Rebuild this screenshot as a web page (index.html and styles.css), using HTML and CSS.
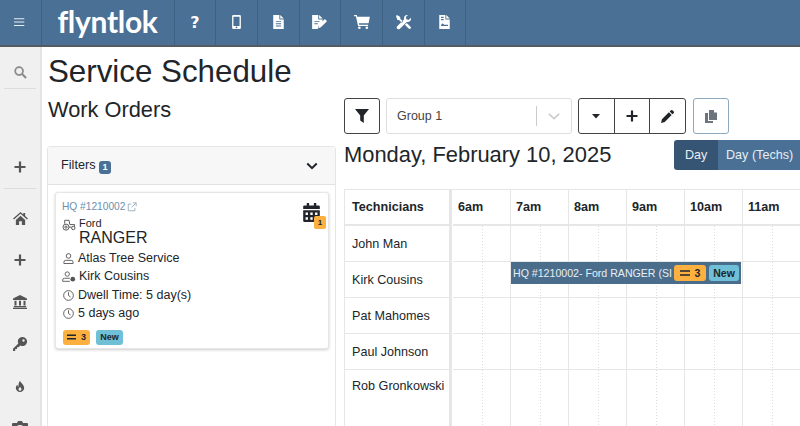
FILE: index.html
```html
<!DOCTYPE html>
<html lang="en">
<head>
<meta charset="utf-8">
<title>Service Schedule</title>
<link rel="stylesheet" href="styles.css">
</head>
<body>
<header class="topbar">
  <div class="nav-cell burger"><svg class="ic-w" viewBox="0 0 14 12" width="12" height="11"><path d="M0 1.500h12M0 5.500h12M0 9.500h12" stroke="#e8eef3" stroke-width="1.200" fill="none"/></svg></div>
  <div class="nav-cell logo"><span class="logo-text">flyntlok</span></div>
  <div class="nav-cell"><span class="qmark">?</span></div>
  <div class="nav-cell"><svg viewBox="0 0 10 16" width="9" height="14"><path fill-rule="evenodd" fill="#fff" d="M1.500 0h7A1.500 1.500 0 0 1 10 1.500v13A1.500 1.500 0 0 1 8.500 16h-7A1.500 1.500 0 0 1 0 14.500v-13A1.500 1.500 0 0 1 1.500 0zM1.500 2v10.500h7V2zM5 13.200a1 1 0 1 0 0 2 1 1 0 0 0 0-2z"/></svg></div>
  <div class="nav-cell"><svg viewBox="0 0 12 16" width="11" height="14"><path fill-rule="evenodd" fill="#fff" d="M0 0h7v5h5v11H0zM8 0l4 4H8zM3 7v1h6V7zM3 9.500v1h6v-1zM3 12v1h6v-1z"/></svg></div>
  <div class="nav-cell"><svg viewBox="0 0 18 16" width="16" height="14"><path fill-rule="evenodd" fill="#fff" d="M0 0h7v5h5v3l-5 5-.5 3H0zM8 0l4 4H8zM2.500 7v1h6V7zM2.500 9.500v1h4v-1z"/><path fill="#fff" d="M14.500 4.500l2.500 2.500-7 7-3 1 .8-3.200z"/></svg></div>
  <div class="nav-cell"><svg viewBox="0 0 18 16" width="16" height="14"><path fill="#fff" d="M0 0h3l.5 2H18l-1.500 7.500H5.500l.3 1.500H16v1.500H4.500L2 1.500H0z"/><circle cx="6" cy="14.500" r="1.500" fill="#fff"/><circle cx="14.500" cy="14.500" r="1.500" fill="#fff"/></svg></div>
  <div class="nav-cell"><svg viewBox="0 0 16 16" width="15" height="15"><path fill="#fff" d="M1 0l3.500 2.200V4l3 3-1.300 1.300-3-3H1.500L0 1zM12 0a3.500 3.500 0 0 0-3.300 4.600L1 12.200A2.100 2.100 0 0 0 3.900 15l7.600-7.600A3.500 3.500 0 0 0 15.800 3l-2.300 2.200-2.400-.6-.6-2.400L12.800.1A3.500 3.500 0 0 0 12 0z"/><path fill="#fff" d="M9.500 10.500l2-2 4 4a1.400 1.400 0 0 1-2 2z"/></svg></div>
  <div class="nav-cell"><svg viewBox="0 0 12 16" width="11" height="14"><path fill-rule="evenodd" fill="#fff" d="M0 0h7v5h5v11H0zM8 0l4 4H8zM2 2v1.500h3V2zM2 4.500V6h3V4.500zM2 11.500l2-2 1.500 1.500h4.500v1.500H2z"/></svg></div>
</header>

<div class="shell">
  <aside class="sidebar">
    <div class="side-item side-search"><svg viewBox="0 0 14 14" width="13" height="13"><circle cx="5.500" cy="5.500" r="4.200" fill="none" stroke="#8a8a8a" stroke-width="1.900"/><path d="M8.700 8.700l4.300 4.300" stroke="#8a8a8a" stroke-width="2.200"/></svg></div>
    <div class="side-spacer"></div>
    <div class="side-item side-add"><svg viewBox="0 0 12 12" width="12" height="12"><path d="M6 .5v11M.5 6h11" stroke="#555" stroke-width="2.200"/></svg></div>
    <nav class="side-links">
      <div class="side-item"><svg viewBox="0 0 16 14" width="15" height="13"><path fill="#555" d="M8 0L0 7l1 1 7-6 7 6 1-1-3-2.700V1h-2v1.600zM3 8.500V14h3.500v-4h3v4H13V8.500L8 4z"/></svg></div>
      <div class="side-item"><svg viewBox="0 0 12 12" width="12" height="12"><path d="M6 .5v11M.5 6h11" stroke="#555" stroke-width="2.200"/></svg></div>
      <div class="side-item"><svg viewBox="0 0 14 14" width="14" height="14"><path fill="#555" d="M7 0l7 3.500V5H0V3.500zM1.500 5.800h2v4.700h-2zM6 5.800h2v4.700H6zM10.500 5.800h2v4.700h-2zM.8 11h12.400v1.200H.8zM0 12.800h14V14H0z"/></svg></div>
      <div class="side-item"><svg viewBox="0 0 14 14" width="14" height="14"><path fill-rule="evenodd" fill="#555" d="M9.500 0a4.500 4.500 0 1 1-2.200 8.400L5.500 10.200H4V12H2.200v2H0v-2.300l5.300-5.200A4.500 4.500 0 0 1 9.500 0zM10.500 2.300a1.200 1.200 0 1 0 0 2.400 1.200 1.200 0 0 0 0-2.400z"/></svg></div>
      <div class="side-item"><svg viewBox="0 0 12 14" width="10" height="13"><path fill-rule="evenodd" fill="#555" d="M6 0c.5 2.500 5 4.500 5 8.700A5 5 0 0 1 1 8.700c0-1.800 1-3 2-3.700 0 1.200.4 2 1.200 2.300C4 4.500 4.500 2 6 0zM6 7.500c-1 1-1.800 1.700-1.800 2.800a1.800 1.800 0 0 0 3.600 0C7.800 9.200 7 8.500 6 7.500z"/></svg></div>
      <div class="side-item"><svg viewBox="0 0 16 14" width="16" height="14"><path fill-rule="evenodd" fill="#555" d="M5 2l1-2h4l1 2h4a1 1 0 0 1 1 1v10a1 1 0 0 1-1 1H1a1 1 0 0 1-1-1V3a1 1 0 0 1 1-1zM8 4a4 4 0 1 0 0 8 4 4 0 0 0 0-8z"/></svg></div>
    </nav>
  </aside>

  <main class="main">
    <h1 class="page-title">Service Schedule</h1>
    <div class="columns">
      <section class="orders">
        <h2 class="orders-title">Work Orders</h2>
        <div class="panel">
          <div class="panel-head">
            <span class="filters-label">Filters <span class="count">1</span></span>
            <svg viewBox="0 0 14 9" width="12" height="8"><path d="M1.500 1.500L7 7l5.500-5.500" fill="none" stroke="#212529" stroke-width="2.400"/></svg>
          </div>
          <div class="panel-body">
            <article class="card">
              <div class="cal-flag">
                <svg viewBox="0 0 14 16" width="17" height="19"><path fill-rule="evenodd" fill="#212529" d="M3 0h2v2h4V0h2v2h2a1 1 0 0 1 1 1v2H0V3a1 1 0 0 1 1-1h2zM0 6h14v9a1 1 0 0 1-1 1H1a1 1 0 0 1-1-1zM2 8v2h2V8zM6 8v2h2V8zM10 8v2h2V8zM2 12v2h2v-2zM6 12v2h2v-2zM10 12v2h2v-2z"/></svg>
                <span class="flag-num">1</span>
              </div>
              <a class="hq">HQ #1210002 <svg viewBox="0 0 12 12" width="10" height="10"><path d="M9.500 7v3.500h-8v-8H5M7 1h4v4M11 1L5.500 6.500" fill="none" stroke="#8fa6b8" stroke-width="1"/></svg></a>
              <div class="vehicle">
                <svg viewBox="0 0 16 14" width="14" height="12"><g fill="none" stroke="#555" stroke-width="1.100"><circle cx="4.500" cy="9.500" r="3.500"/><circle cx="4.500" cy="9.500" r="1.300"/><circle cx="13" cy="10.500" r="2"/><path d="M3 5.500V1.500h5l1 5h5.500v2.500M8 9.500h3"/></g></svg>
                <div class="vehicle-text"><div class="make">Ford</div><div class="model">RANGER</div></div>
              </div>
              <div class="meta"><svg viewBox="0 0 12 12" width="11" height="11"><g fill="none" stroke="#555" stroke-width="1"><circle cx="6" cy="3.200" r="2.500"/><path d="M1 11.500V10a2 2 0 0 1 2-2h6a2 2 0 0 1 2 2v1.500z"/></g></svg><span>Atlas Tree Service</span></div>
              <div class="meta"><svg class="wide" viewBox="0 0 16 12" width="15" height="11"><g fill="none" stroke="#555" stroke-width="1"><circle cx="6" cy="3.200" r="2.500"/><path d="M.8 11.500V10a2 2 0 0 1 2-2H9"/><path d="M.8 11.500H9"/></g><circle cx="12.300" cy="9" r="2.700" fill="#555"/></svg><span>Kirk Cousins</span></div>
              <div class="meta"><svg viewBox="0 0 12 12" width="11" height="11"><g fill="none" stroke="#555" stroke-width="1"><circle cx="6" cy="6" r="5.300"/><path d="M6 2.500V6l2.300 1.600"/></g></svg><span>Dwell Time: 5 day(s)</span></div>
              <div class="meta"><svg viewBox="0 0 12 12" width="11" height="11"><g fill="none" stroke="#555" stroke-width="1"><circle cx="6" cy="6" r="5.300"/><path d="M6 2.500V6l2.300 1.600"/></g></svg><span>5 days ago</span></div>
              <div class="tags">
                <span class="tag tag-amber"><svg viewBox="0 0 10 6" width="9" height="6"><path d="M0 1h10M0 5h10" stroke="#212529" stroke-width="1.600"/></svg>3</span>
                <span class="tag tag-new">New</span>
              </div>
            </article>
          </div>
        </div>
      </section>

      <section class="schedule">
        <div class="toolbar">
          <button class="btn btn-filter"><svg viewBox="0 0 14 14" width="14" height="14"><path fill="#212529" d="M0 0h14L8.800 6.500V14L5.200 11.500V6.500z"/></svg></button>
          <div class="select">
            <span class="select-value">Group 1</span>
            <span class="select-sep"></span>
            <svg viewBox="0 0 14 8" width="12" height="7"><path d="M1 1l6 5.500L13 1" fill="none" stroke="#ccc" stroke-width="2"/></svg>
          </div>
          <div class="btn-group">
            <button class="btn-seg"><svg viewBox="0 0 8 5" width="8" height="5"><path fill="#212529" d="M0 0h8L4 4.500z"/></svg></button>
            <button class="btn-seg"><svg viewBox="0 0 12 12" width="12" height="12"><path d="M6 .5v11M.5 6h11" stroke="#212529" stroke-width="2.200"/></svg></button>
            <button class="btn-seg"><svg viewBox="0 0 14 14" width="13" height="13"><path fill="#212529" d="M10.500.5a1.500 1.500 0 0 1 2.100 0l.9.900a1.500 1.500 0 0 1 0 2.100l-1.200 1.200-3-3zM8.500 2.500l3 3L4 13l-4 1 1-4z"/></svg></button>
          </div>
          <button class="btn btn-copy"><svg viewBox="0 0 12 13" width="12" height="13"><path fill="#6c757d" d="M4 0h5v2.500h3V10H4z"/><path fill="#6c757d" d="M0 3h3v8h5v2H0z"/></svg></button>
        </div>
        <div class="date-row">
          <h3 class="date">Monday, February 10, 2025</h3>
          <div class="views"><span class="view active">Day</span><span class="view">Day (Techs)</span></div>
        </div>
        <div class="calendar">
          <div class="cal-row cal-head">
            <div class="tech">Technicians</div>
            <div class="hours"><div class="hour">6am</div><div class="hour">7am</div><div class="hour">8am</div><div class="hour">9am</div><div class="hour">10am</div><div class="hour">11am</div></div>
          </div>
          <div class="cal-row"><div class="tech">John Man</div><div class="hours slots"><i></i><i></i><i></i><i></i><i></i><i></i></div></div>
          <div class="cal-row"><div class="tech">Kirk Cousins</div><div class="hours slots"><i></i><i></i><i></i><i></i><i></i><i></i>
            <div class="event"><span class="event-text">HQ #1210002- Ford RANGER (SI</span><span class="tag tag-amber ev-tag"><svg viewBox="0 0 10 6" width="10" height="6"><path d="M0 1h10M0 5h10" stroke="#212529" stroke-width="1.600"/></svg>3</span><span class="tag tag-new ev-tag">New</span></div>
          </div></div>
          <div class="cal-row"><div class="tech">Pat Mahomes</div><div class="hours slots"><i></i><i></i><i></i><i></i><i></i><i></i></div></div>
          <div class="cal-row"><div class="tech">Paul Johnson</div><div class="hours slots"><i></i><i></i><i></i><i></i><i></i><i></i></div></div>
          <div class="cal-row cal-last"><div class="tech">Rob Gronkowski</div><div class="hours slots"><i></i><i></i><i></i><i></i><i></i><i></i></div></div>
        </div>
      </section>
    </div>
  </main>
</div>
</body>
</html>
```

FILE: styles.css
```css
* { box-sizing: border-box; }
html, body { margin: 0; height: 426px; overflow: hidden; }
body {
  font-family: "Liberation Sans", Arial, sans-serif;
  color: #212529;
  background: #fff;
  display: flex;
  flex-direction: column;
}
button { font: inherit; background: none; padding: 0; margin: 0; }

.topbar {
  height: 47px;
  flex: none;
  display: flex;
  background: #4a7095;
  border-bottom: 2px solid #555b60;
}
.nav-cell {
  width: 41.7px;
  display: flex;
  align-items: center;
  justify-content: center;
  border-right: 1px solid #3f6282;
  padding-bottom: 1px;
}
.burger { width: 41.500px; }
.logo { width: 133px; padding-bottom: 4px; padding-right: 0; }
.logo-text {
  font-family: Lato, "Open Sans", sans-serif;
  font-weight: 700;
  font-size: 30px;
  letter-spacing: -0.3px;
  color: #fff;
  line-height: 1;
}
.qmark { color: #fff; font-weight: 700; font-size: 16px; font-family: "DejaVu Sans", sans-serif; }

.shell { flex: 1; display: flex; min-height: 0; }
.sidebar {
  width: 42px;
  flex: none;
  background: #f0f0f1;
  border-right: 2px solid #e4e4e5;
  display: flex;
  flex-direction: column;
  align-items: center;
  padding-top: 1px;
  overflow: hidden;
}
.side-item { height: 42px; width: 100%; display: flex; align-items: center; justify-content: center; flex: none; }
.side-search { height: 41px; border-bottom: 1px solid #dcdcdc; margin: 0 4px; width: 32px; padding-top: 9px; }
.side-spacer { height: 58px; flex: none; }
.side-add { height: 42px; border-bottom: 1px solid #dcdcdc; width: 32px; padding-bottom: 1px; }
.side-links { width: 100%; padding-top: 8px; flex: none; }

.main { flex: 1; min-width: 0; padding-left: 6px; overflow: hidden; }
.page-title { margin: 5px 0 0; font-size: 31.300px; font-weight: 400; line-height: 40px; }
.columns { display: flex; gap: 8px; }

.orders { width: 288px; flex: none; }
.orders-title { margin: 4px 0 0; font-size: 21.800px; font-weight: 400; line-height: 28px; }
.panel { margin: 22px 0 0 -1px; height: 300px; border: 1px solid #e6e6e6; border-radius: 3px 3px 0 0; width: 289px; }
.panel-head {
  height: 38px;
  background: #f7f7f7;
  border-bottom: 1px solid #e2e2e2;
  display: flex;
  align-items: center;
  justify-content: space-between;
  padding: 0 17px 0 13px;
}
.filters-label { font-size: 12.700px; }
.count {
  display: inline-block;
  background: #4a7095;
  color: #fff;
  font-size: 9px;
  font-weight: 700;
  line-height: 13px;
  width: 12px;
  text-align: center;
  border-radius: 3px;
  vertical-align: -1px;
}
.panel-body { padding: 7px; }
.card {
  position: relative;
  width: 274px;
  height: 157px;
  background: #fff;
  border: 1px solid #e6e6e6;
  border-radius: 3px;
  box-shadow: 0 1px 3px rgba(0,0,0,.2);
  padding: 8px 6px;
}
.hq { display: flex; align-items: center; gap: 2px; font-size: 10.200px; color: #6d8fab; line-height: 12px; }
.vehicle { display: flex; gap: 3px; align-items: flex-start; margin-top: 4px; margin-bottom: 3px; }
.vehicle svg { margin-top: 2px; flex: none; }
.make { font-size: 11px; line-height: 12px; }
.model { font-size: 16px; line-height: 17px; }
.meta { display: flex; align-items: center; gap: 4px; font-size: 12.500px; line-height: 18.400px; padding-left: 1px; }
.meta svg { flex: none; }
.meta .wide { margin-left: -1px; margin-right: -1px; width: 14px; }
.tags { display: flex; gap: 6px; margin-top: 7px; margin-left: 1px; }
.tag {
  display: inline-flex;
  align-items: center;
  justify-content: center;
  gap: 5px;
  height: 15px;
  font-size: 9px;
  font-weight: 700;
  border-radius: 3px;
}
.tag-amber { background: #fbb040; width: 27px; }
.tag-new { background: #6fc0d6; width: 27px; }
.cal-flag { position: absolute; right: 5px; top: 10px; width: 20px; height: 25px; }
.flag-num {
  position: absolute;
  right: -3px;
  bottom: -1px;
  width: 12px;
  height: 13px;
  background: #fbb040;
  border-radius: 2px;
  font-size: 8px;
  font-weight: 700;
  text-align: center;
  line-height: 13px;
}

.schedule { flex: 1; min-width: 0; padding-top: 10px; margin-top: -4px; overflow: hidden; }
.toolbar { display: flex; height: 36px; gap: 6px; }
.btn, .btn-seg { width: 36px; height: 36px; display: flex; align-items: center; justify-content: center; }
.btn { border: 1px solid #444; border-radius: 3px; }
.btn-copy { border-color: #8fa9bf; margin-left: 1px; }
.select {
  width: 186px;
  border: 1px solid #dedede;
  border-radius: 3px;
  display: flex;
  align-items: center;
  padding: 0 11px 0 10px;
}
.select-value { flex: 1; font-size: 12.500px; color: #444; }
.select-sep { width: 1px; height: 20px; background: #ccc; margin-right: 11px; }
.btn-group { display: flex; border: 1px solid #444; border-radius: 3px; width: 108px; }
.btn-seg { flex: 1; width: auto; height: 34px; border: 0; }
.btn-seg + .btn-seg { border-left: 1px solid #444; }

.date-row { display: flex; justify-content: space-between; align-items: center; margin-top: 6px; height: 30px; }
.date { margin: 0; font-size: 21.900px; font-weight: 400; line-height: 30px; white-space: nowrap; }
.views { display: flex; height: 30px; font-size: 12.600px; color: #e8eef3; flex: none; margin-right: -4px; }
.view { display: flex; align-items: center; padding: 0 8px; background: #4a7095; white-space: nowrap; width: 86px; }
.view.active { background: #365574; border-radius: 3px 0 0 3px; width: 44px; padding: 0 11px; }

.calendar { margin-top: 19px; border-top: 1px solid #e6e6e6; width: 460px; }
.cal-row { display: flex; height: 36px; }
.cal-last { height: 60px; }
.tech {
  width: 108px;
  flex: none;
  padding: 0 7px;
  border-left: 1px solid #e6e6e6;
  border-right: 3px solid #e6e6e6;
  border-bottom: 1px solid #e6e6e6;
  font-size: 12.600px;
  display: flex;
  align-items: center;
  white-space: nowrap;
}
.cal-head .tech { font-weight: 700; border-bottom-width: 2px; }
.cal-last .tech { align-items: flex-start; padding-top: 9px; }
.hours { display: flex; position: relative; flex: 1; margin-left: 1px; }
.hour {
  width: 58px;
  flex: none;
  padding-left: 5px;
  border-right: 1px solid #e6e6e6;
  border-bottom: 2px solid #e6e6e6;
  font-size: 12.600px;
  font-weight: 700;
  display: flex;
  align-items: center;
}
.slots i {
  display: block;
  width: 58px;
  flex: none;
  border-right: 1px solid #e6e6e6;
  border-bottom: 1px solid #e6e6e6;
  background: repeating-linear-gradient(#ddd 0 1px, transparent 1px 3px) 29px 0 / 1px 100% no-repeat;
}
.event {
  position: absolute;
  left: 58px;
  top: 0;
  width: 230px;
  height: 22px;
  background: #4a6d8c;
  display: flex;
  align-items: center;
  padding-left: 2px;
  gap: 2px;
  overflow: hidden;
}
.event-text { color: #e8eef3; font-size: 10.600px; white-space: nowrap; width: 159px; overflow: hidden; flex: none; }
.ev-tag { height: 16px; font-size: 10.500px; gap: 5px; flex: none; }
.ev-tag.tag-amber { width: 32px; }
.ev-tag.tag-new { width: 30px; margin-left: 1px; }
```
